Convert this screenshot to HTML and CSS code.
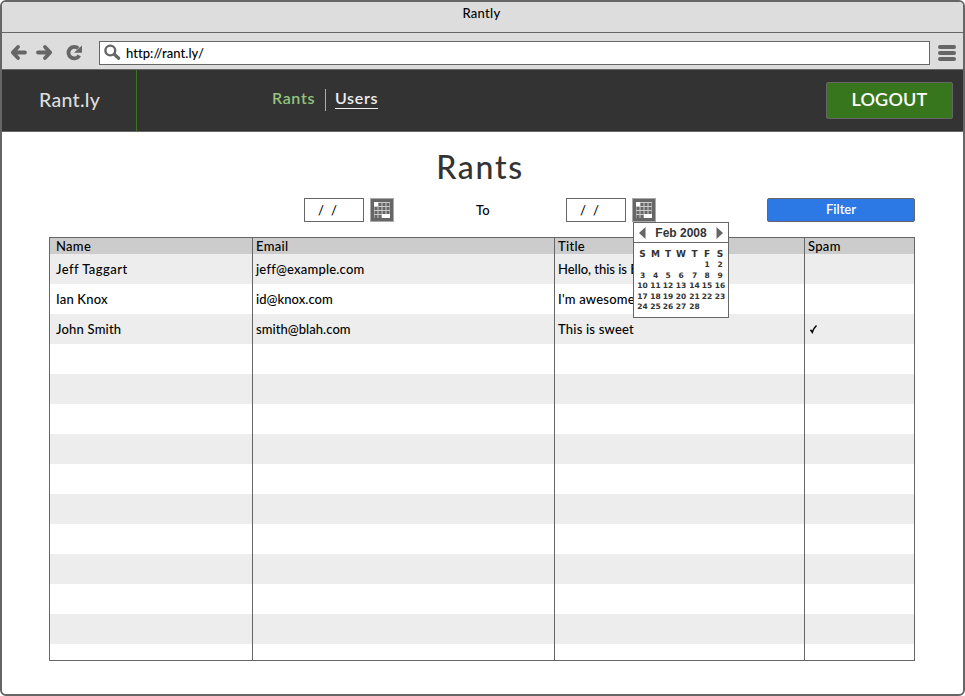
FILE: index.html
```html
<!DOCTYPE html>
<html lang="en">
<head>
<meta charset="utf-8">
<title>Rantly</title>
<link rel="stylesheet" href="styles.css">
</head>
<body>
<div class="window">
  <div class="titlebar"><span class="t-title">Rantly</span></div>
  <div class="toolbar">
    <svg class="nav-icons" width="97" height="36" viewBox="0 0 97 36">
      <path d="M23 19.500H11.500M16 14L10.800 19.500l5.200 5.500" class="stroke"/>
      <path d="M36 19.500H47.500M43 14L48.200 19.500l-5.200 5.500" class="stroke"/>
      <path d="M76.200 15.300A5.800 5.800 0 1 0 77.300 22.500" class="stroke ring"/>
      <path d="M80 12.500v7.300h-8z" class="solid"/>
    </svg>
    <div class="address">
      <svg width="20" height="22" viewBox="0 0 20 22">
        <circle cx="8.300" cy="8.500" r="4.900" class="lens"/>
        <path d="M12.500 12.500l4.200 3.800" class="handle"/>
      </svg>
      <span class="t-url">http://rant.ly/</span>
    </div>
    <div class="menu"><i></i><i></i><i></i></div>
  </div>
  <header class="site">
    <div class="brand"><span class="t-brand">Rant.ly</span></div>
    <nav>
      <a class="current">Rants</a>
      <a class="users">Users</a>
    </nav>
    <div class="logout"><span class="t-logout">LOGOUT</span></div>
  </header>
  <main>
    <h1>Rants</h1>
    <div class="filters">
      <div class="date">/&nbsp; /</div>
      <svg class="cal-icon" width="24" height="24" viewBox="0 0 24 24">
        <rect x="0.500" y="0.500" width="23" height="23" class="edge"/>
        <rect x="2.500" y="2.500" width="19" height="19" class="face"/>
        <path d="M8 4h12v12h-8v4h-8V8h4z" class="shade"/>
        <path d="M8.500 6.500H20M4.500 10.500H20M4.500 14.500H20M4.500 18.500H12" class="dots"/>
      </svg>
      <span class="to">To</span>
      <div class="date">/&nbsp; /</div>
      <div class="picker">
        <svg class="cal-icon" width="24" height="24" viewBox="0 0 24 24">
          <rect x="0.500" y="0.500" width="23" height="23" class="edge"/>
          <rect x="2.500" y="2.500" width="19" height="19" class="face"/>
          <path d="M8 4h12v12h-8v4h-8V8h4z" class="shade"/>
          <path d="M8.500 6.500H20M4.500 10.500H20M4.500 14.500H20M4.500 18.500H12" class="dots"/>
        </svg>
        <div class="calendar">
          <div class="month">
            <svg width="7" height="12" viewBox="0 0 7 12"><path d="M6.500 0v12L0 6z" class="solid"/></svg>
            <span>Feb 2008</span>
            <svg width="7" height="12" viewBox="0 0 7 12"><path d="M.5 0v12L7 6z" class="solid"/></svg>
          </div>
          <div class="days">
            <b>S</b><b>M</b><b>T</b><b>W</b><b>T</b><b>F</b><b>S</b>
            <i></i><i></i><i></i><i></i><i></i><i>1</i><i>2</i>
            <i>3</i><i>4</i><i>5</i><i>6</i><i>7</i><i>8</i><i>9</i>
            <i>10</i><i>11</i><i>12</i><i>13</i><i>14</i><i>15</i><i>16</i>
            <i>17</i><i>18</i><i>19</i><i>20</i><i>21</i><i>22</i><i>23</i>
            <i>24</i><i>25</i><i>26</i><i>27</i><i>28</i>
          </div>
        </div>
      </div>
      <div class="filter"><span class="t-filter">Filter</span></div>
    </div>
    <div class="grid">
      <div class="col name"><div class="head">Name</div><div class="taggart">Jeff Taggart</div><div>Ian Knox</div><div>John Smith</div></div>
      <div class="col email"><div class="head">Email</div><div>jeff@example.com</div><div class="tight">id@knox.com</div><div class="tight">smith@blah.com</div></div>
      <div class="col title"><div class="head">Title</div><div class="hello">Hello, this is E</div><div>I'm awesome</div><div>This is sweet</div></div>
      <div class="col spam"><div class="head">Spam</div><div></div><div></div><div><svg width="10" height="10" viewBox="0 0 10 10"><path d="M2.500 5.800L4.300 8.300Q5.500 4.300 8.500 1.500" class="tick"/></svg></div></div>
    </div>
  </main>
</div>
</body>
</html>
```
FILE: styles.css
```css
* { box-sizing: border-box; }
body { margin: 0; background: #fff; color: #000; font: 500 13px/16px Lato, sans-serif; }
.window { width: 965px; height: 696px; border: 2px solid #666; border-radius: 6px; overflow: hidden; }
.titlebar { height: 31px; border-bottom: 1px solid #666; background: #ddd; text-align: center; padding: 3px 2px 0 0; }
.t-title { letter-spacing: .3px; }
.toolbar { height: 37px; border-bottom: 1px solid #666; background: #ddd; display: flex; }
.nav-icons { flex: none; }
.stroke { fill: none; stroke: #666; stroke-width: 3.8; stroke-linecap: round; stroke-linejoin: round; }
.ring { stroke-linecap: butt; }
.solid { fill: #666; }
.address { width: 831px; height: 24px; margin-top: 8px; border: 1px solid #666; background: #fff; display: flex; align-items: center; padding-left: 2px; }
.lens { fill: none; stroke: #666; stroke-width: 2.4; }
.handle { fill: none; stroke: #666; stroke-width: 3.2; stroke-linecap: round; }
.t-url { margin-left: 4px; letter-spacing: .05px; }
.menu { width: 18px; margin: 12px 0 0 8px; display: flex; flex-direction: column; gap: 2px; }
.menu i { height: 4px; border-radius: 2px; background: #666; }
.site { height: 62px; border-bottom: 1px solid #666; background: #333; display: flex; }
.brand { width: 135px; border-right: 1px solid #38761d; color: #ddd; font-size: 19.5px; line-height: 24px; padding: 18px 0 0 37px; font-weight: 500; letter-spacing: .3px; }
nav { display: flex; margin-left: 135px; padding-top: 19px; font-size: 16px; line-height: 18px; height: 42px; font-weight: 600; letter-spacing: .65px; }
nav a { height: 22px; }
.current { color: #93c47d; border-right: 1px solid #93c47d; width: 54px; }
.users { color: #eee; margin-left: 9px; text-decoration: underline; text-underline-offset: 4px; text-decoration-thickness: 1px; }
.logout { margin: 12px 10px 0 auto; width: 127px; height: 37px; border: 1px solid #666; border-radius: 2px; background: #38761d; color: #fff; font-size: 18px; line-height: 33px; text-align: center; font-weight: 600; letter-spacing: .2px; }
main { padding: 18px 48px 0 47px; }
h1 { margin: 0; height: 48px; font-size: 32px; line-height: 34px; font-weight: 500; color: #333; text-align: center; letter-spacing: 1.7px; padding-right: 4px; }
.filters { display: flex; height: 24px; padding-left: 255px; }
.date { width: 60px; border: 1px solid #666; padding: 3px 0 0 13px; letter-spacing: .2px; }
.cal-icon { display: block; margin-left: 6px; flex: none; }
.edge { fill: #666; stroke: #aaa; }
.face { fill: #fff; stroke: #666; stroke-width: 3; }
.shade { fill: #ccc; }
.dots { fill: none; stroke: #666; stroke-width: 3; stroke-dasharray: 3 1; }
.to { width: 172px; padding: 4px 0 0 82px; }
.picker { position: relative; }
.calendar { position: absolute; left: 7px; top: 24px; width: 96px; height: 96px; border: 1px solid #666; background: #fff; color: #333; z-index: 2; }
.month { height: 20px; border-bottom: 1px solid #666; display: flex; align-items: center; justify-content: space-between; padding: 0 5px; font: bold 12px/16px "Liberation Sans", sans-serif; }
.days { display: grid; grid-template-columns: 13px 13px 12px 14px 13px 12px 14px; grid-template-rows: 11px repeat(5, 10.5px); padding: 6px 0 0 2px; text-align: center; font: bold 7.500px/10px "DejaVu Sans", sans-serif; }
.days b { font-size: 9px; line-height: 11px; }
.days i { font-style: normal; }
.filter { margin-left: 111px; width: 148px; border: 1px solid #666; border-radius: 2px; background: #2c78e4; color: #fff; text-align: center; line-height: 21px; font-weight: 600; }
.grid { margin-top: 15px; display: flex; height: 424px; width: 866px; border: 1px solid #666; }
.col { border-left: 1px solid #666; background: repeating-linear-gradient(#ededed 0 30px, #fff 30px 60px) 0 16px; white-space: nowrap; overflow: hidden; letter-spacing: .2px; }
.col div { height: 30px; padding-left: 3px; line-height: 30px; }
.col .head { height: 16px; line-height: 17px; background: #ccc; letter-spacing: .3px; }
.name { width: 202px; border-left: 0; }
.name div, .name .head { padding-left: 6px; }
.col .taggart { letter-spacing: .45px; }
.email { width: 302px; }
.col .tight { letter-spacing: .05px; }
.title { width: 250px; }
.col .hello { letter-spacing: -.03px; }
.spam { width: 110px; }
.tick { fill: none; stroke: #000; stroke-width: 1.500; }
```
